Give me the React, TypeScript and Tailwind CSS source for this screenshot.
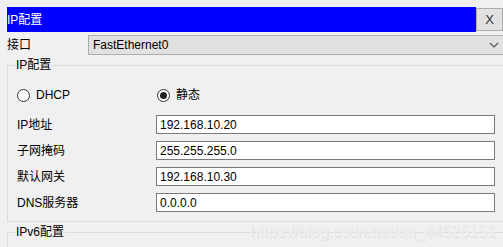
import React from 'react';

const font = { fontFamily: '"Liberation Sans", "Noto Sans CJK SC", sans-serif' };

const Radio = ({ checked }: { checked?: boolean }) => (
  <span className="w-[13px] h-[13px] rounded-full border border-[#333] bg-white flex items-center justify-center">
    {checked && <span className="w-[7px] h-[7px] rounded-full bg-[#222]" />}
  </span>
);

const Field = ({ label, value }: { label: string; value: string }) => (
  <div className="flex items-center h-[19px]">
    <span className="w-[139px]">{label}</span>
    <div className="w-[339px] h-[19px] border border-[#7a7a7a] bg-white flex items-center pl-[3px]">{value}</div>
  </div>
);

export default function App() {
  return (
    <div
      className="relative w-[503px] h-[247px] overflow-hidden bg-[#f0f0f0] pt-[7px] pl-[7px] text-[12px] text-black"
      style={font}
    >
      {/* title bar */}
      <div className="flex h-[25px]">
        <div className="flex-1 bg-[#0000ff] text-white flex items-center">IP配置</div>
        <div className="w-[27px] h-[23px] mt-px bg-[#e1e1e1] border border-[#adadad] flex items-center justify-center text-[13px] text-[#333]">
          X
        </div>
      </div>

      {/* interface combo */}
      <div className="flex items-center h-[20px] mt-[3px]">
        <span className="w-[81px]">接口</span>
        <div className="flex-1 h-[20px] bg-[#e1e1e1] border border-[#adadad] border-r-0 flex items-center justify-between pl-[4px] pr-[4px]">
          <span>FastEthernet0</span>
          <svg width="10" height="6" viewBox="0 0 10 6" fill="none" stroke="#555" strokeWidth="1.2">
            <path d="M1 1l4 4 4-4" />
          </svg>
        </div>
      </div>

      {/* IP config group */}
      <div className="relative mt-[10px] h-[157px] border border-[#dcdcdc] border-r-0 pl-[9px] pt-[22px]">
        <span className="absolute -top-[8px] left-[7px] bg-[#f0f0f0] px-px leading-[14px]">IP配置</span>
        <div className="flex items-center h-[14px]">
          <div className="flex items-center gap-[6px] w-[140px]">
            <Radio />
            <span>DHCP</span>
          </div>
          <div className="flex items-center gap-[6px]">
            <Radio checked />
            <span>静态</span>
          </div>
        </div>
        <div className="flex flex-col gap-[7px] mt-[13px]">
          <Field label="IP地址" value="192.168.10.20" />
          <Field label="子网掩码" value="255.255.255.0" />
          <Field label="默认网关" value="192.168.10.30" />
          <Field label="DNS服务器" value="0.0.0.0" />
        </div>
      </div>

      {/* IPv6 group */}
      <div className="relative mt-[10px] h-[40px] border-t border-l border-[#dcdcdc]">
        <span className="absolute -top-[8px] left-[7px] bg-[#f0f0f0] px-px leading-[14px]">IPv6配置</span>
      </div>

      {/* watermark */}
      <span
        className="absolute left-[250px] top-[220px] text-[16px] text-[#ebebeb]"
        style={{ textShadow: '0 0 1px #fff, 1px 1px 0 #dedede' }}
      >
        https://blog.csdn.net/qq_44526151
      </span>
    </div>
  );
}
